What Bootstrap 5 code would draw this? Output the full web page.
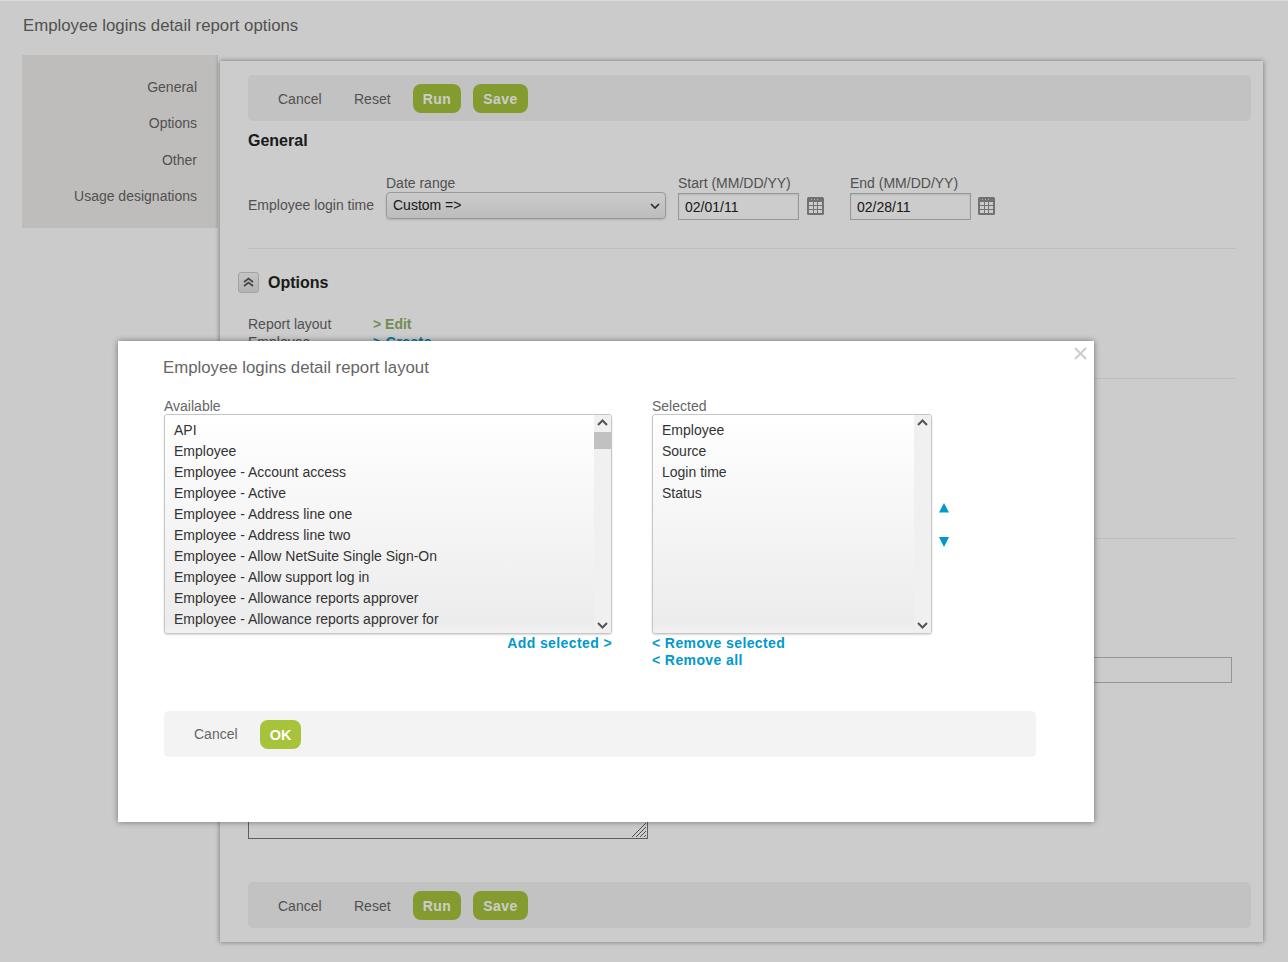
<!DOCTYPE html>
<html lang="en">
<head>
<meta charset="utf-8">
<title>Employee logins detail report options</title>
<link href="https://cdn.jsdelivr.net/npm/bootstrap@5.3.0/dist/css/bootstrap.min.css" rel="stylesheet">
<style>
html,body{height:962px;overflow:hidden}
body{font-family:"Liberation Sans",Arial,sans-serif;font-size:14px;color:#666;background:#fefefe}
.pg{position:relative;height:962px;overflow:hidden;border-top:1px solid #dcdcdc}
.pg-title{font-size:16.8px;font-weight:400;line-height:20px;margin:0;padding:15px 0 19px 23px;color:#666}
.side{width:196px;height:173px;margin-left:22px;background:#eeedeb;padding:23px 21px 0 0;box-shadow:inset -3px 0 3px -2px rgba(0,0,0,.08)}
.side a{display:block;text-align:right;color:#666;text-decoration:none;line-height:18px;margin-bottom:18.4px}
.panel{width:1043px;height:881px;margin:6px 0 0 2px;background:#fff;box-shadow:0 0 5px rgba(0,0,0,.45);padding:14px 12px 0 28px;display:flex;flex-direction:column}
.bar{height:46px;background:#f3f3f3;border-radius:5px;padding-left:30px;flex:none}
.bar a{color:#666;text-decoration:none;padding-top:2px}
.bar .c1{width:76px}
.bar .c2{width:59px}
.gbtn{height:29px;line-height:27px;padding:2px 0 0;border:0;border-radius:8px;background:#a5c23b;color:#fff;font-size:14px;font-weight:700;letter-spacing:.5px}
.gbtn:hover{background:#a5c23b;color:#fff}
.b-run{width:48px;margin-right:12px}
.b-save{width:55px}
.sec-h{font-size:16px;font-weight:700;line-height:20px;color:#222;margin:0}
.genh{margin-top:10px;margin-bottom:25px}
.fld label{display:block;line-height:14px;margin:0 0 2px;color:#666}
.fld-dr{margin:0 12px 1px 0}
.fld-dt label{margin-bottom:3px}
.fld-s{margin-right:26px}
.lbl-login{width:138px;line-height:27px;margin-bottom:1px}
.sel{width:280px;height:27px;padding:0 0 0 6px;font-size:14px;color:#222;border:1px solid #c0c0c0;border-radius:4px;box-shadow:0 1px 2px rgba(0,0,0,.15);background:url("data:image/svg+xml,%3csvg xmlns='http://www.w3.org/2000/svg' viewBox='0 0 10 6'%3e%3cpath fill='none' stroke='%23333' stroke-width='1.6' d='M1 1l4 4 4-4'/%3e%3c/svg%3e") no-repeat right 5px center/10px 6px,linear-gradient(#fff,#ececec)}
.dt{width:121px;height:27px;padding:0 6px;font-size:14px;border:1px solid #bdbdbd;border-radius:0;color:#222;background:#fff;box-shadow:inset 0 1px 2px rgba(0,0,0,.1)}
.cal{display:block;width:17px;height:18px;flex:none;margin:0 0 5px 8px}
.cal-e{margin-left:7px}
.rule{height:1px;background:#eee;width:988px;flex:none}
.opt-h{margin:23px 0 0 -10px;height:22px}
.tog{width:21px;height:21px;padding:0;border:1px solid #ccc;border-radius:3px;background:linear-gradient(#f6f6f6,#e0e0e0);margin:-2px 9px 0 0;display:flex;align-items:center;justify-content:center}
.rows{margin-top:21px;line-height:18px}
.rows span{display:inline-block;width:125px}
.lk-g{color:#8eb06c;font-weight:700;text-decoration:none}
.lk-b{color:#0099cc;font-weight:700;text-decoration:none;letter-spacing:.4px}
.hid-in{height:26px;width:400px;border:1px solid #bbb;background:#fff;align-self:flex-end;margin-right:19px;flex:none}
.hid-ta{width:400px;height:80px;border:1px solid #777;background:#fff;position:relative;flex:none}
.grip{position:absolute;right:0;bottom:0;width:16px;height:16px}
.shade{position:absolute;inset:0;background:rgba(0,0,0,.2)}
.dlg{position:absolute;left:118px;top:340px;width:976px;height:481px;background:#fff;border:0;border-radius:0;box-shadow:0 0 6px rgba(0,0,0,.45);padding:17px 58px 0 45px;display:block}
.dlg-t{font-size:16.8px;line-height:20px;font-weight:400;color:#666;margin:0 0 20px}
.shut{position:absolute;right:7px;top:6px;width:13px;height:13px;padding:0;border:0;background:none;line-height:0}
.lb-wrap{margin-left:1px}
.lb-wrap>div>label{display:block;line-height:14px;height:16px;color:#666;margin:0;padding-top:1px}
.lb{height:220px;border:1px solid #c6c6c6;border-radius:3px;background:linear-gradient(#fff 0,#ececec 96%,#f2f2f2 100%);box-shadow:0 1px 2px rgba(0,0,0,.15);overflow:hidden}
.lb-a{width:448px}
.lb-s{width:280px}
.lb .list-group{flex:1;padding-top:5px;border-radius:0}
.lb .list-group-item{background:transparent;border:0;padding:0 0 0 9px;line-height:21px;height:21px;color:#333;font-size:14px}
.sb{width:17px;flex:none;background:#f0f0f0;position:relative}
.sb svg{position:absolute;left:3px;width:11px;height:7px}
.sb .u{top:4px}
.sb .d{bottom:4px}
.thumb{position:absolute;left:0;right:0;top:17px;height:17px;background:#c1c1c1}
.lnks{line-height:17px;padding-top:1px}
.cols{gap:40px}
.arrows{width:24px;margin-left:7px;padding-top:88px;gap:18px}
.arrows svg{display:block;width:10px;height:15px}
.arrows svg+svg{margin-top:-1px}
.dlg-bar{margin-top:42px;margin-left:1px;width:872px;height:46px;background:#f3f3f3;border-radius:5px;padding-left:30px}
.dlg-bar a{color:#666;text-decoration:none;width:66px}
.b-ok{width:41px;background:#a6c33a;font-size:14.5px;letter-spacing:0}
.b-ok:hover{background:#a6c33a}
</style>
</head>
<body>
<div class="pg">
  <h1 class="pg-title">Employee logins detail report options</h1>
  <div class="d-flex align-items-start">
    <nav class="side">
      <a href="#">General</a>
      <a href="#">Options</a>
      <a href="#">Other</a>
      <a href="#">Usage designations</a>
    </nav>
    <main class="panel">
      <div class="bar d-flex align-items-center">
        <a class="c1" href="#">Cancel</a><a class="c2" href="#">Reset</a>
        <button class="btn gbtn b-run" type="button">Run</button>
        <button class="btn gbtn b-save" type="button">Save</button>
      </div>
      <h2 class="sec-h genh">General</h2>
      <div class="d-flex align-items-end">
        <div class="lbl-login">Employee login time</div>
        <div class="fld fld-dr">
          <label for="dr">Date range</label>
          <select id="dr" class="form-select sel"><option>Custom =&gt;</option></select>
        </div>
        <div class="fld fld-dt fld-s">
          <label for="ds">Start (MM/DD/YY)</label>
          <div class="d-flex align-items-end">
            <input id="ds" class="form-control dt" value="02/01/11">
            <svg class="cal" viewBox="0 0 17 18"><rect width="17" height="18" rx="1.500" fill="#8f8f8f"/><rect x="2" y="5" width="13" height="11" fill="#fff"/><path stroke="#8f8f8f" d="M2 8.500h13M2 12.500h13M6.500 5v11M10.500 5v11"/><path stroke="#ddd" stroke-dasharray="1 2" d="M4 2.500h9"/></svg>
          </div>
        </div>
        <div class="fld fld-dt">
          <label for="de">End (MM/DD/YY)</label>
          <div class="d-flex align-items-end">
            <input id="de" class="form-control dt" value="02/28/11">
            <svg class="cal cal-e" viewBox="0 0 17 18"><rect width="17" height="18" rx="1.500" fill="#8f8f8f"/><rect x="2" y="5" width="13" height="11" fill="#fff"/><path stroke="#8f8f8f" d="M2 8.500h13M2 12.500h13M6.500 5v11M10.500 5v11"/><path stroke="#ddd" stroke-dasharray="1 2" d="M4 2.500h9"/></svg>
          </div>
        </div>
      </div>
      <div class="rule" style="margin-top:28px"></div>
      <div class="d-flex align-items-center opt-h">
        <button class="tog" type="button" aria-label="Collapse">
          <svg width="11" height="10" viewBox="0 0 11 10"><path fill="none" stroke="#555" stroke-width="1.7" d="M1 5l4.500-3.500L10 5M1 9l4.500-3.500L10 9"/></svg>
        </button>
        <h2 class="sec-h">Options</h2>
      </div>
      <div class="rows">
        <div><span>Report layout</span><a class="lk-g" href="#">&gt; Edit</a></div>
        <div><span>Employee</span><a class="lk-b" href="#">&gt; Create</a></div>
      </div>
      <div class="rule" style="margin-top:27px"></div>
      <div class="rule" style="margin-top:159px"></div>
      <div class="hid-in" style="margin-top:118px"></div>
      <div class="hid-ta" style="margin-top:76px">
        <svg class="grip" viewBox="0 0 16 16"><path stroke="#666" stroke-width="1" d="M1 15L15 1M5 15L15 5M9 15l6-6M13 15l2-2"/></svg>
      </div>
      <div class="bar d-flex align-items-center" style="margin-top:43px">
        <a class="c1" href="#">Cancel</a><a class="c2" href="#">Reset</a>
        <button class="btn gbtn b-run" type="button">Run</button>
        <button class="btn gbtn b-save" type="button">Save</button>
      </div>
    </main>
  </div>
  <div class="shade"></div>
  <div class="modal-content dlg" role="dialog">
    <button class="shut" type="button" aria-label="Close">
      <svg width="13" height="13" viewBox="0 0 13 13"><path stroke="#ccc" stroke-width="2" d="M1 1l11 11M12 1L1 12"/></svg>
    </button>
    <h3 class="dlg-t">Employee logins detail report layout</h3>
    <div class="d-flex cols lb-wrap">
      <div>
        <label>Available</label>
        <div class="lb lb-a d-flex">
          <div class="list-group list-group-flush">
            <div class="list-group-item">API</div>
            <div class="list-group-item">Employee</div>
            <div class="list-group-item">Employee - Account access</div>
            <div class="list-group-item">Employee - Active</div>
            <div class="list-group-item">Employee - Address line one</div>
            <div class="list-group-item">Employee - Address line two</div>
            <div class="list-group-item">Employee - Allow NetSuite Single Sign-On</div>
            <div class="list-group-item">Employee - Allow support log in</div>
            <div class="list-group-item">Employee - Allowance reports approver</div>
            <div class="list-group-item">Employee - Allowance reports approver for</div>
          </div>
          <div class="sb">
            <svg class="u" viewBox="0 0 11 7"><path fill="none" stroke="#555" stroke-width="2" d="M1 6l4.500-4.500L10 6"/></svg>
            <div class="thumb"></div>
            <svg class="d" viewBox="0 0 11 7"><path fill="none" stroke="#555" stroke-width="2" d="M1 1l4.500 4.500L10 1"/></svg>
          </div>
        </div>
        <div class="lnks text-end"><a class="lk-b" href="#">Add selected &gt;</a></div>
      </div>
      <div>
        <label>Selected</label>
        <div class="d-flex">
          <div class="lb lb-s d-flex">
            <div class="list-group list-group-flush">
              <div class="list-group-item">Employee</div>
              <div class="list-group-item">Source</div>
              <div class="list-group-item">Login time</div>
              <div class="list-group-item">Status</div>
            </div>
            <div class="sb">
              <svg class="u" viewBox="0 0 11 7"><path fill="none" stroke="#555" stroke-width="2" d="M1 6l4.500-4.500L10 6"/></svg>
              <svg class="d" viewBox="0 0 11 7"><path fill="none" stroke="#555" stroke-width="2" d="M1 1l4.500 4.500L10 1"/></svg>
            </div>
          </div>
          <div class="arrows d-flex flex-column">
            <svg viewBox="0 0 10 15"><path fill="#0099cc" d="M5 1l5 9.500H0z"/></svg>
            <svg viewBox="0 0 10 15"><path fill="#0099cc" d="M0 3h10L5 13z"/></svg>
          </div>
        </div>
        <div class="lnks">
          <div><a class="lk-b" href="#">&lt; Remove selected</a></div>
          <div><a class="lk-b" href="#">&lt; Remove all</a></div>
        </div>
      </div>
    </div>
    <div class="dlg-bar d-flex align-items-center">
      <a href="#">Cancel</a>
      <button class="btn gbtn b-ok" type="button">OK</button>
    </div>
  </div>
</div>
</body>
</html>
